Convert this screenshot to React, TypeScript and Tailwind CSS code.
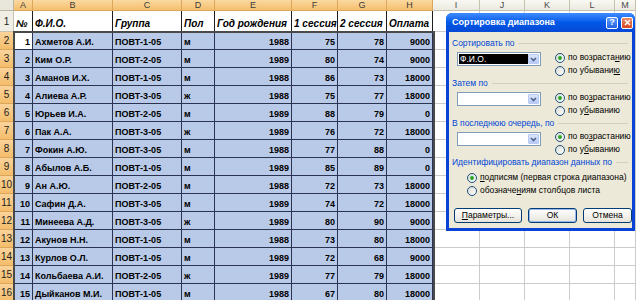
import React from "react";

const LETTERS = ["A", "B", "C", "D", "E", "F", "G", "H", "I", "J", "K", "L", "M"];
const HEADERS = ["№", "Ф.И.О.", "Группа", "Пол", "Год рождения", "1 сессия", "2 сессия", "Оплата"];

const ROWS: string[][] = [
  ["1", "Ахметов А.И.", "ПОВТ-1-05", "м", "1988", "75", "78", "9000"],
  ["2", "Ким О.Р.", "ПОВТ-2-05", "м", "1989", "80", "74", "9000"],
  ["3", "Аманов И.Х.", "ПОВТ-1-05", "м", "1988", "86", "73", "18000"],
  ["4", "Алиева А.Р.", "ПОВТ-3-05", "ж", "1988", "75", "77", "18000"],
  ["5", "Юрьев И.А.", "ПОВТ-2-05", "м", "1989", "88", "79", "0"],
  ["6", "Пак А.А.", "ПОВТ-3-05", "ж", "1989", "76", "72", "18000"],
  ["7", "Фокин А.Ю.", "ПОВТ-3-05", "м", "1988", "77", "88", "0"],
  ["8", "Абылов А.Б.", "ПОВТ-1-05", "м", "1989", "85", "89", "0"],
  ["9", "Ан А.Ю.", "ПОВТ-2-05", "м", "1988", "72", "73", "18000"],
  ["10", "Сафин Д.А.", "ПОВТ-3-05", "м", "1989", "74", "72", "18000"],
  ["11", "Минеева А.Д.", "ПОВТ-3-05", "ж", "1989", "80", "90", "9000"],
  ["12", "Акунов Н.Н.", "ПОВТ-1-05", "м", "1988", "73", "80", "18000"],
  ["13", "Курлов О.Л.", "ПОВТ-1-05", "м", "1989", "72", "68", "9000"],
  ["14", "Кольбаева А.И.", "ПОВТ-2-05", "ж", "1989", "77", "79", "18000"],
  ["15", "Дыйканов М.И.", "ПОВТ-1-05", "м", "1988", "67", "80", "18000"],
];

// columns that hold numbers are right aligned
const RIGHT = [true, false, false, false, true, true, true, true];
const EMPTY = [0, 1, 2, 3, 4];

const Radio = ({ checked, children }: { checked?: boolean; children: React.ReactNode }) => (
  <div className="flex items-center h-[13px] gap-[3px] whitespace-nowrap">
    <span className="w-[10px] h-[10px] rounded-full border border-[#1c5180] bg-linear-to-br from-[#dcdcd4] to-white flex items-center justify-center shrink-0">
      {checked && <span className="w-[4px] h-[4px] rounded-full bg-[#2ca82c]" />}
    </span>
    <span>{children}</span>
  </div>
);

const Combo = ({ value }: { value?: string }) => (
  <div className="w-[84px] h-[14px] bg-white border border-[#7f9db9] flex p-[1px] shrink-0">
    <div className="flex-1 flex">
      {value && (
        <span className="w-full h-full bg-black text-white flex items-center pl-[1px] leading-none">{value}</span>
      )}
    </div>
    <div className="w-[11px] h-full rounded-[1px] bg-linear-to-b from-[#dbe6fd] to-[#b7cbf7] border border-[#b9cbf3] flex items-center justify-center">
      <svg width="7" height="5" viewBox="0 0 7 5">
        <path d="M1 1l2.5 2.5L6 1" stroke="#4d6185" strokeWidth="1.6" fill="none" />
      </svg>
    </div>
  </div>
);

const GroupLabel = ({ children }: { children: React.ReactNode }) => (
  <div className="flex items-center h-[10px] pl-[3px] pr-[4px]">
    <span className="text-[#0046d5] whitespace-nowrap leading-none">{children}</span>
    <div className="flex-1 h-px bg-[#d0d0bf] ml-[4px]" />
  </div>
);

const Button = ({ w, children, def }: { w: string; children: React.ReactNode; def?: boolean }) => (
  <div
    className={`${w} h-[15px] rounded-[3px] border border-[#003c74] bg-linear-to-b from-white to-[#e6e4da] flex items-center justify-center leading-none ${
      def ? "shadow-[inset_0_0_0_1px_#9ab8f0]" : ""
    }`}
  >
    {children}
  </div>
);

const SortDialog = () => (
  <div className="absolute left-[446px] top-[13px] w-[189px] h-[218px] rounded-t-[6px] bg-[#0843d6] flex flex-col font-['Liberation_Sans',sans-serif] text-[8.5px] text-black">
    {/* title bar */}
    <div className="h-[19px] rounded-t-[6px] bg-linear-to-b from-[#3d8cff] via-[#0058e8] to-[#0749d4] flex items-center pl-[6px] pr-[2px]">
      <span className="text-white font-bold text-[9px] flex-1 whitespace-nowrap">Сортировка диапазона</span>
      <div className="flex gap-[3px]">
        <div className="w-[12px] h-[12px] rounded-[2px] border border-white bg-linear-to-b from-[#5a9bff] to-[#2662e4] text-white text-[9px] font-bold flex items-center justify-center leading-none">
          ?
        </div>
        <div className="w-[12px] h-[12px] rounded-[2px] border border-white bg-linear-to-b from-[#e98a64] to-[#d4461f] flex items-center justify-center">
          <svg width="7" height="7" viewBox="0 0 7 7">
            <path d="M1 1l5 5M6 1l-5 5" stroke="white" strokeWidth="1.5" />
          </svg>
        </div>
      </div>
    </div>

    {/* body */}
    <div className="flex-1 mx-[3px] mb-[3px] bg-[#ece9d8] flex flex-col pt-[6px]">
      <GroupLabel>Сортировать по</GroupLabel>
      <div className="flex mt-[3px] h-[26px]">
        <div className="ml-[8px] mt-[1px]">
          <Combo value="Ф.И.О." />
        </div>
        <div className="ml-[14px] flex flex-col">
          <Radio checked>
            по возраста<u>н</u>ию
          </Radio>
          <Radio>
            по убывани<u>ю</u>
          </Radio>
        </div>
      </div>

      <div className="mt-[1px]">
        <GroupLabel>Затем по</GroupLabel>
      </div>
      <div className="flex mt-[3px] h-[26px]">
        <div className="ml-[8px] mt-[1px]">
          <Combo />
        </div>
        <div className="ml-[14px] flex flex-col">
          <Radio checked>
            по во<u>з</u>растанию
          </Radio>
          <Radio>
            по у<u>б</u>ыванию
          </Radio>
        </div>
      </div>

      <div className="mt-[1px]">
        <GroupLabel>В последнюю очередь, по</GroupLabel>
      </div>
      <div className="flex mt-[2px] h-[26px]">
        <div className="ml-[8px] mt-[2px]">
          <Combo />
        </div>
        <div className="ml-[14px] flex flex-col">
          <Radio checked>
            по во<u>з</u>растанию
          </Radio>
          <Radio>
            по у<u>б</u>ыванию
          </Radio>
        </div>
      </div>

      <div className="mt-[1px]">
        <GroupLabel>Идентифицировать диапазон данных по</GroupLabel>
      </div>
      <div className="flex flex-col ml-[18px] mt-[4px]">
        <Radio checked>
          <u>п</u>одписям (первая строка диапазона)
        </Radio>
        <Radio>
          обозначе<u>н</u>иям столбцов листа
        </Radio>
      </div>

      <div className="flex gap-[6px] pl-[5px] mt-[11px]">
        <Button w="w-[68px]">
          <u>П</u>араметры...
        </Button>
        <Button w="w-[49px]" def>
          ОК
        </Button>
        <Button w="w-[49px]">Отмена</Button>
      </div>
    </div>
  </div>
);

export default function App() {
  return (
    <div className="relative w-[636px] h-[300px] overflow-hidden bg-white font-['Liberation_Sans',sans-serif]">
      <div className="grid grid-cols-[14px_19px_80px_69px_33px_77px_46px_49px_46px_47px_45px_45px_45px_1fr]">
        {/* column letters */}
        <div className="h-[11px] bg-[#e9e7dc] border-r border-b border-[#b8b5a6]" />
        {LETTERS.map((l, i) => (
          <div
            key={l}
            className={`h-[11px] border-r border-b flex items-center justify-center text-[9px] leading-none ${
              i < 8
                ? "bg-linear-to-b from-[#fbd9a0] to-[#f5bf6c] border-[#dca65c] text-[#3b3b3b]"
                : "bg-linear-to-b from-[#f9f8f3] to-[#ebe9df] border-[#c5c2b2] text-[#4a4a4a]"
            }`}
          >
            {l}
          </div>
        ))}

        {/* row 1: table headers */}
        <div className="h-[21px] bg-[#f1efe5] border-r border-b border-[#c5c2b2] flex items-center justify-center text-[10px] text-[#222]">
          1
        </div>
        {HEADERS.map((h) => (
          <div
            key={h}
            className="h-[21px] bg-white border-r border-b border-[#1e1e1e] flex items-end pb-[2px] pl-[2px] text-[10px] font-bold italic whitespace-nowrap leading-none"
          >
            {h}
          </div>
        ))}
        {EMPTY.map((k) => (
          <div key={k} className="h-[21px] border-r border-b border-[#cbcbcb]" />
        ))}

        {/* data rows */}
        {ROWS.map((r, ri) => (
          <React.Fragment key={ri}>
            <div className="h-[18px] bg-linear-to-b from-[#fbd39a] to-[#f4bd6a] border-r border-b border-[#dca65c] flex items-center justify-center text-[10px] text-[#222]">
              {ri + 2}
            </div>
            {r.map((v, ci) => (
              <div
                key={ci}
                className={`h-[18px] border-r border-b border-[#2a3452] flex items-end pb-[2px] text-[9px] font-bold whitespace-nowrap leading-none text-black ${
                  RIGHT[ci] ? "justify-end pr-[2px]" : "pl-[2px]"
                } ${ri === 0 && ci === 0 ? "bg-white" : "bg-[#b8cae8]"}`}
              >
                {v}
              </div>
            ))}
            {EMPTY.map((k) => (
              <div key={k} className="h-[18px] border-r border-b border-[#cbcbcb]" />
            ))}
          </React.Fragment>
        ))}
      </div>

      {/* selection outline A2:H16 */}
      <div className="absolute left-[13px] top-[31px] w-[422px] h-[280px] border-2 border-[#4a4a4a] pointer-events-none" />

      <SortDialog />
    </div>
  );
}
